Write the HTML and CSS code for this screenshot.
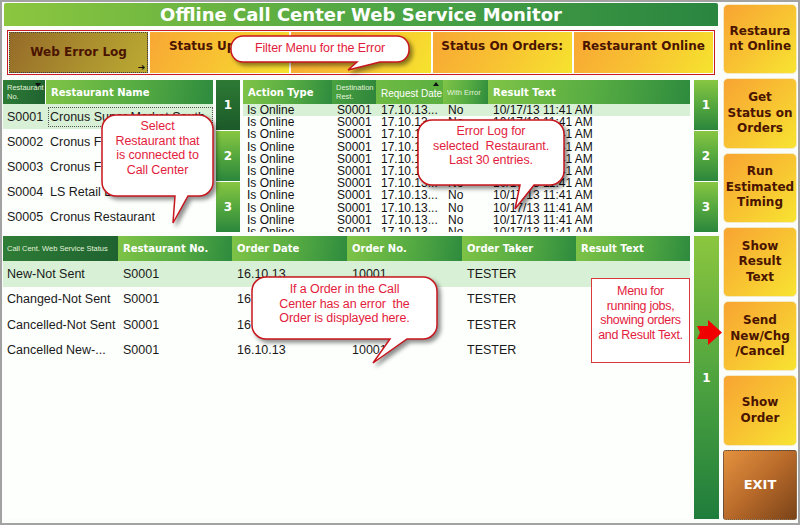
FILE: index.html
```html
<!DOCTYPE html>
<html lang="en">
<head>
    <meta charset="UTF-8">
    <title>Offline Call Center Web Service Monitor</title>
    <link rel="stylesheet" href="styles.css">
</head>
<body>
    <div class="frame">
        <div class="main">
            <div class="title">Offline Call Center Web Service Monitor</div>

            <div class="filter">
                <div class="filter-btn active">Web Error Log<span class="enter">&#10132;</span></div>
                <div class="filter-btn">Status Update:</div>
                <div class="filter-btn">Order Status:</div>
                <div class="filter-btn">Status On Orders:</div>
                <div class="filter-btn">Restaurant Online</div>
            </div>

            <div class="top">
                <div class="rest-list">
                    <div class="rest-head">
                        <div class="hcell dark tiny">Restaurant<br>No.<span class="sort down"></span></div>
                        <div class="hcell">Restaurant Name</div>
                    </div>
                    <div class="rest-row selected"><span>S0001</span><span class="focus">Cronus Super Market South</span></div>
                    <div class="rest-row"><span>S0002</span><span>Cronus Family Diner</span></div>
                    <div class="rest-row"><span>S0003</span><span>Cronus Fast Food</span></div>
                    <div class="rest-row"><span>S0004</span><span>LS Retail Demo</span></div>
                    <div class="rest-row"><span>S0005</span><span>Cronus Restaurant</span></div>
                </div>

                <div class="pager">
                    <div class="page current">1</div>
                    <div class="page">2</div>
                    <div class="page">3</div>
                </div>

                <div class="log">
                    <div class="log-head">
                        <div class="hcell">Action Type</div>
                        <div class="hcell mid tiny">Destination<br>Rest.</div>
                        <div class="hcell light plain">Request Date<span class="sort up"></span></div>
                        <div class="hcell tiny">With Error</div>
                        <div class="hcell">Result Text</div>
                    </div>
                    <div class="log-row selected"><span>Is Online</span><span>S0001</span><span>17.10.13...</span><span>No</span><span>10/17/13 11:41 AM</span></div>
                    <div class="log-row"><span>Is Online</span><span>S0001</span><span>17.10.13...</span><span>No</span><span>10/17/13 11:41 AM</span></div>
                    <div class="log-row"><span>Is Online</span><span>S0001</span><span>17.10.13...</span><span>No</span><span>10/17/13 11:41 AM</span></div>
                    <div class="log-row"><span>Is Online</span><span>S0001</span><span>17.10.13...</span><span>No</span><span>10/17/13 11:41 AM</span></div>
                    <div class="log-row"><span>Is Online</span><span>S0001</span><span>17.10.13...</span><span>No</span><span>10/17/13 11:41 AM</span></div>
                    <div class="log-row"><span>Is Online</span><span>S0001</span><span>17.10.13...</span><span>No</span><span>10/17/13 11:41 AM</span></div>
                    <div class="log-row"><span>Is Online</span><span>S0001</span><span>17.10.13...</span><span>No</span><span>10/17/13 11:41 AM</span></div>
                    <div class="log-row"><span>Is Online</span><span>S0001</span><span>17.10.13...</span><span>No</span><span>10/17/13 11:41 AM</span></div>
                    <div class="log-row"><span>Is Online</span><span>S0001</span><span>17.10.13...</span><span>No</span><span>10/17/13 11:41 AM</span></div>
                    <div class="log-row"><span>Is Online</span><span>S0001</span><span>17.10.13...</span><span>No</span><span>10/17/13 11:41 AM</span></div>
                    <div class="log-row"><span>Is Online</span><span>S0001</span><span>17.10.13...</span><span>No</span><span>10/17/13 11:41 AM</span></div>
                </div>

                <div class="pager last">
                    <div class="page">1</div>
                    <div class="page">2</div>
                    <div class="page">3</div>
                </div>
            </div>

            <div class="bottom">
                <div class="orders">
                    <div class="order-head">
                        <div class="hcell dark tiny">Call Cent. Web Service Status</div>
                        <div class="hcell">Restaurant No.</div>
                        <div class="hcell">Order Date</div>
                        <div class="hcell">Order No.</div>
                        <div class="hcell">Order Taker</div>
                        <div class="hcell">Result Text</div>
                    </div>
                    <div class="order-row selected"><span>New-Not Sent</span><span>S0001</span><span>16.10.13</span><span>10001</span><span>TESTER</span><span></span></div>
                    <div class="order-row"><span>Changed-Not Sent</span><span>S0001</span><span>16.10.13</span><span>10001</span><span>TESTER</span><span></span></div>
                    <div class="order-row"><span>Cancelled-Not Sent</span><span>S0001</span><span>16.10.13</span><span>10001</span><span>TESTER</span><span></span></div>
                    <div class="order-row"><span>Cancelled New-...</span><span>S0001</span><span>16.10.13</span><span>10001</span><span>TESTER</span><span></span></div>
                </div>
                <div class="pager single">
                    <div class="page">1</div>
                </div>
            </div>
        </div>

        <div class="side">
            <div class="side-btn">Restaura<br>nt Online</div>
            <div class="side-btn">Get<br>Status on<br>Orders</div>
            <div class="side-btn">Run<br>Estimated<br>Timing</div>
            <div class="side-btn">Show<br>Result<br>Text</div>
            <div class="side-btn">Send<br>New/Chg<br>/Cancel</div>
            <div class="side-btn">Show<br>Order</div>
            <div class="side-btn exit">EXIT</div>
        </div>

        <!-- annotation callouts -->
        <div class="callout c-filter">
            <svg width="178" height="26"><path d="M12,0 H166 A12,12 0 0 1 178,12 V14 A12,12 0 0 1 166,26 H149 L117,34 L126,26 H12 A12,12 0 0 1 0,14 V12 A12,12 0 0 1 12,0 Z"/></svg>
            <div class="callout-text">Filter Menu for the Error</div>
        </div>
        <div class="callout c-rest">
            <svg width="111" height="81"><path d="M14,0 H97 A14,14 0 0 1 111,14 V67 A14,14 0 0 1 97,81 H86 L71,108 L73,81 H14 A14,14 0 0 1 0,67 V14 A14,14 0 0 1 14,0 Z"/></svg>
            <div class="callout-text">Select<br>Restaurant that<br>is connected to<br>Call Center</div>
        </div>
        <div class="callout c-log">
            <svg width="146" height="65"><path d="M14,0 H132 A14,14 0 0 1 146,14 V51 A14,14 0 0 1 132,65 H116 L97,89 L102,65 H14 A14,14 0 0 1 0,51 V14 A14,14 0 0 1 14,0 Z"/></svg>
            <div class="callout-text">Error Log for<br>selected&nbsp; Restaurant.<br>Last 30 entries.</div>
        </div>
        <div class="callout c-order">
            <svg width="185" height="62"><path d="M14,0 H171 A14,14 0 0 1 185,14 V48 A14,14 0 0 1 171,62 H155 L121,86 L138,62 H14 A14,14 0 0 1 0,48 V14 A14,14 0 0 1 14,0 Z"/></svg>
            <div class="callout-text">If a Order in the Call<br>Center has an error&nbsp; the<br>Order is displayed here.</div>
        </div>
        <div class="note">Menu for<br>running jobs,<br>showing orders<br>and Result Text.</div>
        <svg class="red-arrow" width="26" height="26"><polygon points="0,6 11,6 11,0 25,12.5 11,25 11,19 0,19 3,12.5"/></svg>
    </div>
</body>
</html>
```

FILE: styles.css
```css
body {
    margin: 0;
    font-family: "Liberation Sans", Arial, sans-serif;
}
.frame {
    position: relative;
    width: 800px;
    height: 525px;
    box-sizing: border-box;
    border: 2px solid #a2a2a2;
    background: #fbfdfb;
    padding: 1px 1px 3px 1px;
    display: grid;
    grid-template-columns: 716px 74px;
    column-gap: 4px;
}
.main {
    display: grid;
    grid-template-rows: 23px 46px 152px 283px;
    row-gap: 4px;
}
.title {
    margin: 0 1px;
    background: linear-gradient(to right, #8cc63f, #4ba444 55%, #2a8540);
    color: white;
    font: bold 18px/23px "DejaVu Sans", Verdana, sans-serif;
    text-align: center;
    border-radius: 2px 2px 0 0;
}
.filter {
    margin: 0 4px 1px 4px;
    border: 1.5px solid #c91a24;
    padding: 1px;
    display: grid;
    grid-template-columns: repeat(5, 1fr);
    gap: 2px;
}
.filter-btn {
    position: relative;
    display: flex;
    justify-content: center;
    padding-top: 7px;
    background: linear-gradient(120deg, #f8a734, #f8c232 50%, #f6e32e);
    color: #4a1400;
    font: bold 12px/15px "DejaVu Sans", Verdana, sans-serif;
    white-space: nowrap;
}
.filter-btn.active {
    align-items: center;
    padding-top: 0;
    box-sizing: border-box;
    border: 1px dotted #3e3e3e;
    background: linear-gradient(120deg, #956a29, #a98c2e 50%, #bbab32);
}
.enter {
    position: absolute;
    right: 2px;
    bottom: 0;
    font-size: 9px;
    line-height: 10px;
    color: #111;
}

/* tables */
.top {
    display: grid;
    grid-template-columns: 210px 24px 447px 25px;
    column-gap: 3px;
}
.bottom {
    display: grid;
    grid-template-columns: 687px 25px;
    column-gap: 4px;
}
.hcell {
    position: relative;
    display: flex;
    align-items: center;
    padding-left: 5px;
    background: linear-gradient(100deg, #80c447, #55ab42 55%, #2e8b3e);
    color: white;
    font: bold 10px "DejaVu Sans", Verdana, sans-serif;
    white-space: nowrap;
    overflow: hidden;
}
.hcell.dark {
    background: linear-gradient(100deg, #2f7d36, #1f6230);
}
.hcell.mid {
    background: linear-gradient(100deg, #4aa23f, #2f853b);
}
.hcell.light {
    background: linear-gradient(100deg, #6fbb44, #5aae40);
}
.hcell.tiny {
    font: 7.5px/9px "Liberation Sans", Arial, sans-serif;
    color: #e2f3dc;
    padding-left: 4px;
}
.hcell.plain {
    font: 10px "Liberation Sans", Arial, sans-serif;
    padding-top: 3px;
}
.sort {
    position: absolute;
    top: 3px;
    right: 4px;
    width: 0;
    height: 0;
    border-left: 3.5px solid transparent;
    border-right: 3.5px solid transparent;
}
.sort.down {
    border-top: 4px solid #111;
}
.sort.up {
    top: 2px;
    border-bottom: 4px solid #111;
}

.rest-list {
    display: grid;
    grid-template-rows: 24px repeat(5, 25px);
    background: #fdfffd;
    overflow: hidden;
}
.rest-head,
.rest-row {
    display: grid;
    grid-template-columns: 42px 1fr;
}
.rest-head {
    column-gap: 1px;
}
.rest-row {
    align-items: center;
    font-size: 12.5px;
    color: #1a1a1a;
}
.rest-row span {
    padding-left: 4px;
    white-space: nowrap;
    overflow: hidden;
}
.rest-row span + span {
    padding-left: 5px;
}
.selected {
    background: #d8f0d6;
}
.rest-row .focus {
    margin: 2px 0 2px 3px;
    padding: 2px 0 2px 1px;
    border: 1px dotted #555;
}

.pager {
    display: grid;
    grid-template-rows: repeat(3, 1fr);
    row-gap: 1px;
}
.pager.last {
    margin-left: 1px;
}
.pager.single {
    grid-template-rows: 1fr;
}
.page {
    display: flex;
    align-items: center;
    justify-content: center;
    background: linear-gradient(to bottom, #88c642, #55a83e 50%, #2b863c);
    color: white;
    font: bold 12px "DejaVu Sans", Verdana, sans-serif;
}
.page.current {
    background: linear-gradient(to bottom, #2d7a34, #1c5a2a);
}
.single .page {
    background: linear-gradient(to bottom, #8cc63f, #4fa43f 50%, #1f7d3c);
}

.log {
    display: flex;
    flex-direction: column;
    background: #fdfffd;
    overflow: hidden;
}
.log-head,
.log-row {
    display: grid;
    grid-template-columns: 89px 44px 67px 45px 1fr;
    flex: none;
}
.log-head {
    height: 24px;
}
.log-row {
    height: 12.2px;
    font-size: 12px;
    line-height: 12.2px;
    color: #111;
}
.log-row span {
    padding-left: 5px;
    white-space: nowrap;
    overflow: hidden;
}
.log-row span:first-child {
    padding-left: 4px;
}

.orders {
    display: grid;
    grid-template-rows: 25px repeat(4, 25.5px);
    align-content: start;
    background: #fdfffd;
}
.order-head,
.order-row {
    display: grid;
    grid-template-columns: 115px 114px 115px 115px 114px 1fr;
}
.order-row {
    align-items: center;
    font-size: 12.5px;
    color: #1a1a1a;
}
.order-row span {
    padding-left: 5px;
    white-space: nowrap;
    overflow: hidden;
}
.order-row span:first-child {
    padding-left: 4px;
}

/* right hand menu */
.side {
    display: grid;
    grid-template-rows: repeat(7, 1fr);
    row-gap: 4px;
    padding-top: 1px;
}
.side-btn {
    display: flex;
    align-items: center;
    justify-content: center;
    text-align: center;
    border-radius: 5px;
    border: 1px solid #f4ebc6;
    background: linear-gradient(135deg, #f8a432, #f8c232 50%, #f8e431);
    color: #4a1400;
    font: bold 12px/15.5px "DejaVu Sans", Verdana, sans-serif;
}
.side-btn.exit {
    border: 1px dotted #555;
    border-radius: 3px;
    background: linear-gradient(135deg, #e4923f, #b86a2a 50%, #7a4318);
    color: white;
    font-size: 13px;
}

/* annotations */
.callout {
    position: absolute;
}
.callout svg {
    position: absolute;
    left: 0;
    top: 0;
    overflow: visible;
    filter: drop-shadow(3px 3px 2px rgba(0,0,0,0.45));
}
.callout path {
    fill: #fff;
    stroke: #c8161e;
    stroke-width: 1.5;
}
.callout-text,
.note {
    position: relative;
    text-align: center;
    color: #e31c3d;
    font-size: 12.5px;
    line-height: 14.5px;
    letter-spacing: -0.1px;
    white-space: nowrap;
}
.c-filter { left: 229px; top: 34px; width: 178px; height: 26px; }
.c-filter .callout-text { padding-top: 5px; }
.c-rest { left: 100px; top: 113px; width: 111px; height: 81px; }
.c-rest .callout-text { padding-top: 4px; }
.c-log { left: 416px; top: 118px; width: 146px; height: 65px; }
.c-log .callout-text { padding-top: 4px; }
.c-order { left: 250px; top: 275px; width: 185px; height: 62px; }
.c-order .callout-text { padding-top: 5px; }
.note {
    position: absolute;
    left: 589px;
    top: 276px;
    width: 97px;
    height: 78px;
    padding-top: 5px;
    border: 1px solid #d63a3a;
    background: #fff;
    letter-spacing: -0.3px;
}
.red-arrow {
    position: absolute;
    left: 695px;
    top: 318px;
}
.red-arrow polygon {
    fill: #f00000;
}
```
